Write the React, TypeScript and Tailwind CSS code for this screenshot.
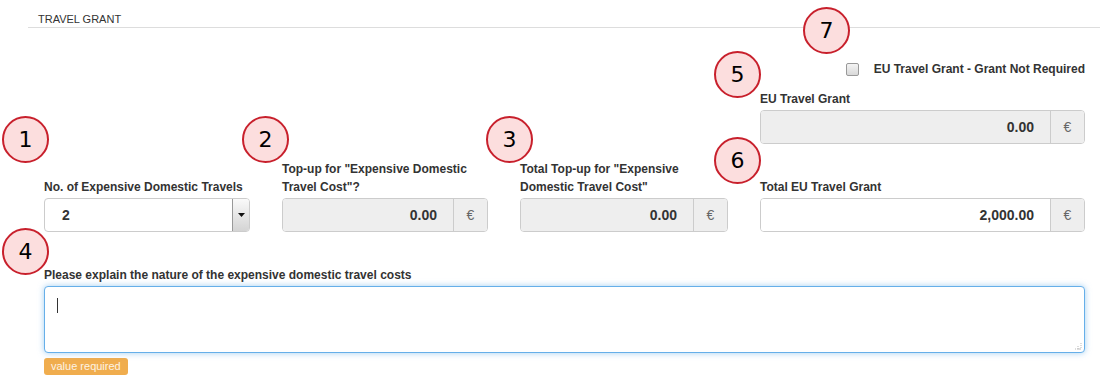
import React from 'react';

function Marker({ n, className }: { n: number; className: string }) {
  return (
    <div
      className={`absolute w-[47px] h-[47px] rounded-full border-2 border-[#c8202c] bg-[#fcdede] flex items-center justify-center text-[22px] text-black font-['DejaVu_Sans',sans-serif] ${className}`}
    >
      {n}
    </div>
  );
}

function Label({ children }: { children: React.ReactNode }) {
  return <div className="text-[12px] leading-[18px] font-bold text-[#333] mb-[2px]">{children}</div>;
}

function EuroInput({ value, readOnly = true }: { value: string; readOnly?: boolean }) {
  return (
    <div className="flex h-[34px] rounded-[4px] border border-[#ccc] overflow-hidden">
      <div
        className={`flex-1 flex items-center justify-end pr-[16px] text-[14px] font-bold text-[#333] ${
          readOnly ? 'bg-[#eee]' : 'bg-white'
        }`}
      >
        {value}
      </div>
      <div className="w-[34px] flex items-center justify-center bg-[#eee] border-l border-[#ccc] text-[14px] text-[#666]">
        €
      </div>
    </div>
  );
}

export default function App() {
  return (
    <div className="relative w-[1110px] h-[378px] bg-white overflow-hidden font-['Liberation_Sans',Arial,sans-serif]">
      {/* Section header */}
      <div className="ml-[28px] mr-[10px] pt-[12px] pb-px border-b border-[#ddd]">
        <div className="pl-[10px] text-[11px] leading-[14px] text-[#333]">TRAVEL GRANT</div>
      </div>

      <div className="pl-[44px] pr-[25px]">
        {/* EU grant column */}
        <div className="grid grid-cols-[206px_206px_208px_1fr] gap-x-[32px]">
          <div className="col-start-4">
            <div className="mt-[32px] h-[18px] flex items-center justify-end gap-[15px]">
              <span className="w-[13px] h-[13px] border border-[#999] rounded-[2px] bg-gradient-to-b from-[#f4f4f4] to-[#d8d8d8]" />
              <span className="text-[12px] font-bold text-[#333]">EU Travel Grant - Grant Not Required</span>
            </div>
            <div className="mt-[12px]">
              <Label>EU Travel Grant</Label>
              <EuroInput value="0.00" />
            </div>
          </div>
        </div>

        {/* Main row */}
        <div className="mt-[16px] grid grid-cols-[206px_206px_208px_1fr] gap-x-[32px] items-end">
          <div>
            <Label>No. of Expensive Domestic Travels</Label>
            <div className="flex h-[34px] rounded-[4px] border border-[#ccc] bg-white overflow-hidden">
              <div className="flex-1 flex items-center pl-[17px] text-[14px] font-bold text-[#333]">2</div>
              <div className="w-[17px] flex items-center justify-center border-l border-[#999] bg-gradient-to-b from-[#fafafa] to-[#d4d4d4]">
                <svg width="7" height="4" viewBox="0 0 7 4">
                  <path d="M0 0h7L3.5 4z" fill="#111" />
                </svg>
              </div>
            </div>
          </div>
          <div>
            <Label>
              Top-up for "Expensive Domestic
              <br />
              Travel Cost"?
            </Label>
            <EuroInput value="0.00" />
          </div>
          <div>
            <Label>
              Total Top-up for "Expensive
              <br />
              Domestic Travel Cost"
            </Label>
            <EuroInput value="0.00" />
          </div>
          <div>
            <Label>Total EU Travel Grant</Label>
            <EuroInput value="2,000.00" readOnly={false} />
          </div>
        </div>

        {/* Explanation */}
        <div className="mt-[34px]">
          <Label>Please explain the nature of the expensive domestic travel costs</Label>
          <div className="relative h-[67px] rounded-[4px] border border-[#66afe9] shadow-[0_0_6px_rgba(102,175,233,0.6)] bg-white">
            <div className="absolute left-[12px] top-[11px] w-px h-[15px] bg-[#333]" />
            <svg className="absolute right-[2px] bottom-[2px]" width="8" height="8" viewBox="0 0 8 8">
              <path d="M7 1v6M4 4v3M1 7h6M4 7h3" stroke="#bbb" strokeWidth="1" strokeDasharray="1 1" />
            </svg>
          </div>
          <div className="mt-[3px] inline-flex items-center h-[17px] px-[7px] rounded-[3px] bg-[#f0ad4e] text-[11px] text-[#fdf3e4]">
            value required
          </div>
        </div>
      </div>

      <Marker n={1} className="left-[2px] top-[116px]" />
      <Marker n={2} className="left-[242px] top-[116px]" />
      <Marker n={3} className="left-[486px] top-[116px]" />
      <Marker n={4} className="left-[2px] top-[228px]" />
      <Marker n={5} className="left-[714px] top-[51px]" />
      <Marker n={6} className="left-[714px] top-[137px]" />
      <Marker n={7} className="left-[803px] top-[7px]" />
    </div>
  );
}
